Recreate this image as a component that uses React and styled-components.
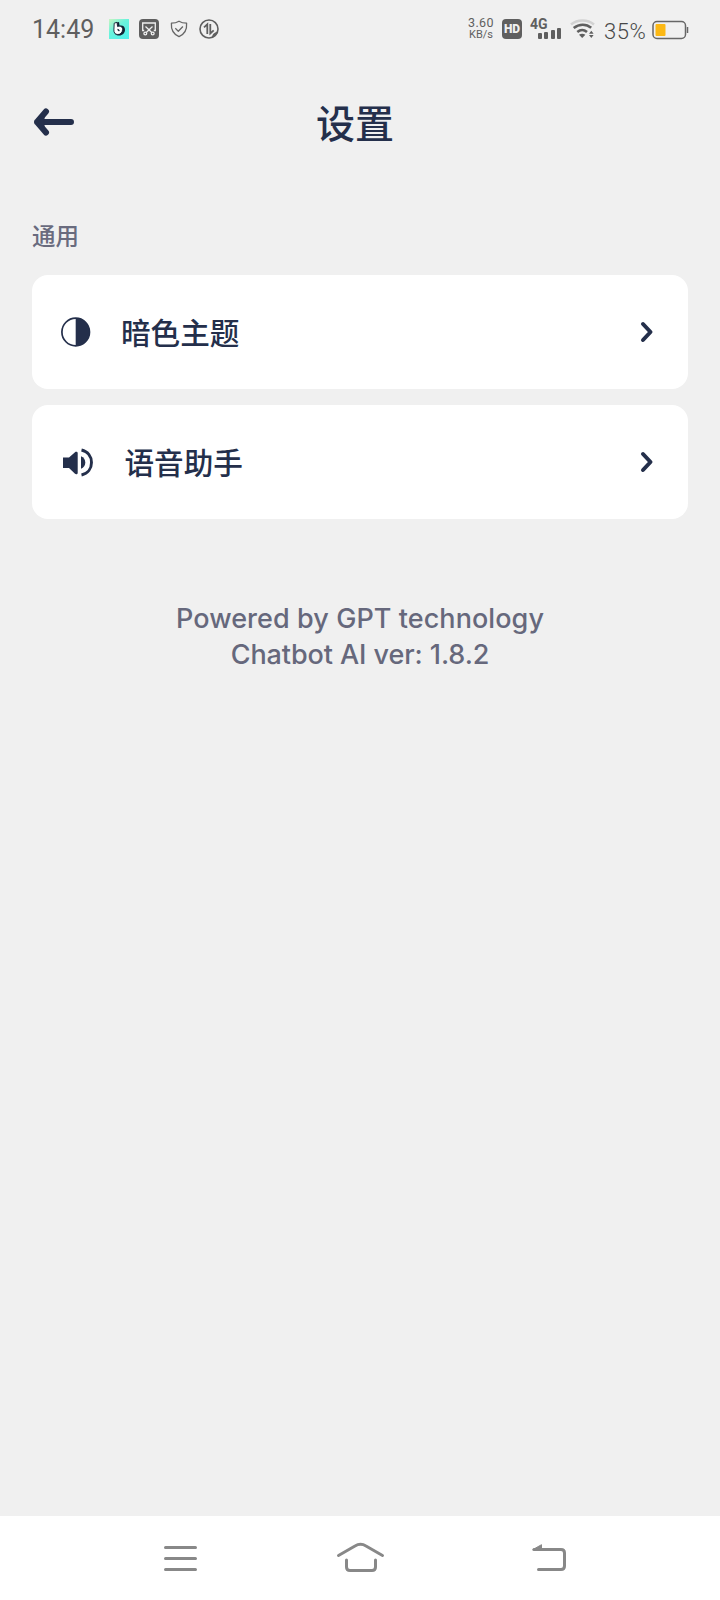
import React from 'react'
import styled, { createGlobalStyle } from 'styled-components'

const GlobalStyle = createGlobalStyle`
    * {
        box-sizing: border-box;
    }
    body {
        margin: 0;
        background: #f0f0f0;
    }
    svg {
        display: block;
        flex-shrink: 0;
        overflow: visible;
    }
`;

const Screen = styled.div`
    width: 100%;
    height: 1600px;
    display: flex;
    flex-direction: column;
    background: #f0f0f0;
    color: #242f4b;
    font-family: Inter, "Noto Sans CJK SC", sans-serif;
`;

const StatusBar = styled.div`
    height: 58px;
    display: flex;
    align-items: center;
    justify-content: space-between;
    padding: 0 31px 0 32px;
    color: #5f5f5f;
    font-family: Roboto, sans-serif;
`;

const StatusGroup = styled.div`
    display: flex;
    align-items: center;
    gap: ${props => props.$gap};
`;

const Clock = styled.div`
    width: 67px;
    padding-top: 2px;
    font-size: 25px;
    line-height: 30px;
`;

const Speed = styled.div`
    width: 26px;
    height: 22px;
    margin-right: 8px;
    display: flex;
    flex-direction: column;
    align-items: center;
    justify-content: space-between;
    line-height: 10px;
    white-space: nowrap;
`;

const SpeedValue = styled.div`
    font-size: 12.5px;
    letter-spacing: 0.4px;
`;

const SpeedUnit = styled.div`
    font-size: 11px;
`;

const HdBadge = styled.div`
    width: 20px;
    height: 20px;
    margin-right: 8px;
    border-radius: 4px;
    background: #5f5f5f;
    color: #f0f0f0;
    font-size: 12px;
    font-weight: 900;
    line-height: 20px;
    text-align: center;
`;

const Signal = styled.div`
    width: 32px;
    height: 22px;
    margin-right: 8px;
    display: flex;
    flex-direction: column;
    font-size: 14px;
    font-weight: 700;
    line-height: 12px;
`;

const SignalBars = styled.div`
    display: flex;
    align-items: flex-end;
    justify-content: flex-end;
    gap: 2.5px;
    height: 11px;
    margin-top: -2px;
    padding-right: 1px;
`;

const SignalBar = styled.div`
    width: 4px;
    height: ${props => props.$height}px;
    border-radius: 1px;
    background: #5f5f5f;
`;

const Percent = styled.div`
    width: 43px;
    margin: 5px 5px 0 9px;
    color: #484848;
    font-size: 22px;
    font-weight: 300;
    letter-spacing: 0.5px;
    line-height: 24px;
`;

const Header = styled.header`
    height: 128px;
    display: grid;
    grid-template-columns: 42px 1fr 42px;
    align-items: center;
    padding: 0 32px;
`;

const BackButton = styled.button`
    padding: 0;
    border: 0;
    background: none;
`;

const Title = styled.h1`
    margin: 0;
    padding: 4px 10px 0 0;
    font-size: 39px;
    font-weight: 500;
    line-height: 56px;
    text-align: center;
`;

const Content = styled.main`
    flex: 1;
    padding: 32px 32px 0;
`;

const SectionLabel = styled.h2`
    height: 36px;
    margin: 0 0 21px;
    color: #696b7e;
    font-size: 23.5px;
    font-weight: 500;
    line-height: 37px;
`;

const List = styled.div`
    display: flex;
    flex-direction: column;
    gap: 16px;
`;

const Row = styled.div`
    height: 114px;
    display: flex;
    align-items: center;
    padding: 0 34px 0 28px;
    border-radius: 16px;
    background: #fff;
`;

const RowText = styled.div`
    flex: 1;
    margin-left: ${props => props.$offset}px;
    padding-top: 2px;
    font-size: 29.6px;
    font-weight: 500;
    line-height: 44px;
`;

const Footer = styled.footer`
    margin-top: 82px;
    color: #66687c;
    font-size: 27px;
    font-weight: 500;
    line-height: 36px;
    text-align: center;
`;

const FooterLine = styled.div`
    letter-spacing: ${props => props.$spacing}px;
`;

const NavBar = styled.nav`
    height: 84px;
    display: flex;
    align-items: center;
    gap: 126px;
    padding-left: 159px;
    background: #fff;
`;

function AppIcon() {
    return (
        <svg width="20" height="20" viewBox="0 0 20 20">
            <defs>
                <linearGradient id="app" x1="0" y1="0" x2="0.8" y2="1">
                    <stop offset="0" stopColor="#c8f5c0" />
                    <stop offset="0.45" stopColor="#6bf3dc" />
                    <stop offset="1" stopColor="#4ff0ea" />
                </linearGradient>
            </defs>
            <rect width="20" height="20" fill="url(#app)" />
            <path d="M6 4l4-1 .6 3.800c3-.8 5.400.8 5.400 3.900 0 3.400-2.600 5.800-5.800 5.800S4.800 14.800 5 11.500z" fill="#123" />
            <path d="M5.200 4.200l2.800-.9.600 4.300c2.700-1.100 5.200.2 5 3-.2 3-2.200 4.900-4.700 4.900-2.900 0-4.200-1.900-4-4.600z" fill="#fff" stroke="#123" strokeWidth="0.900" />
            <path d="M8.700 10.200q1.800.2 1.600 1.800-1.700 0-1.600-1.800z" fill="#123" stroke="#123" strokeWidth="0.600" />
        </svg>
    )
}

function ScreenshotIcon() {
    return (
        <svg width="20" height="20" viewBox="0 0 20 20" fill="none" stroke="#f0f0f0" strokeWidth="1.300">
            <rect width="20" height="20" rx="4" fill="#5f5f5f" stroke="none" />
            <path d="M5.200 11.500H3.700V4h12.600v7.500h-1.500M6.500 7.500l6 5.700M13.500 7.500l-6 5.700" />
            <circle cx="6.300" cy="14.500" r="1.400" />
            <circle cx="13.700" cy="14.500" r="1.400" />
        </svg>
    )
}

function ShieldIcon() {
    return (
        <svg width="20" height="20" viewBox="0 0 20 20" fill="none" stroke="#666" strokeWidth="1.300" strokeLinejoin="round">
            <path d="M10 2.200c2.300 1.500 4.600 2 7.600 2 .5 6.500-2.200 11-7.600 13.400C4.600 15.200 1.900 10.700 2.400 4.200c3 0 5.300-.5 7.600-2z" />
            <path d="M6.300 9.300l3 2.900 4.600-4.700" />
        </svg>
    )
}

function DataIcon() {
    return (
        <svg width="20" height="20" viewBox="0 0 20 20" fill="none" stroke="#5f5f5f" strokeWidth="1.600">
            <circle cx="10" cy="10" r="9" />
            <path d="M5 8.300l3.300-3V15M11.300 5v9.500l3.400-3.200" strokeWidth="1.800" />
            <path d="M19 11.500c-.6 4-3.400 6.800-7.300 7.500 1.600-1 1.500-2.800 2.700-4.200s3.400-1.400 4.600-3.300z" fill="#5f5f5f" stroke="none" />
        </svg>
    )
}

function WifiIcon() {
    return (
        <svg width="25" height="20" viewBox="0 0 25 20" fill="none" stroke="#5f5f5f" strokeWidth="2.600">
            <path d="M1 5.500c6.500-5.300 16.500-5.300 23 0" stroke="#d2d2d2" />
            <path d="M3.700 9c5.500-4.300 12.500-4.300 17.500-.2M7.300 13c3-2.500 6.700-2.500 9.700 0" />
            <path d="M9 15.800c2-1.500 4.400-1.500 6.400 0L12.200 19z" fill="#5f5f5f" stroke="none" />
            <path d="M19 14.700l2.300-3 2.300 3zM19 16l2.300 3 2.300-3z" fill="#5f5f5f" stroke="none" />
        </svg>
    )
}

function BatteryIcon() {
    return (
        <svg width="37" height="20" viewBox="0 0 37 20">
            <rect x="1" y="2.500" width="32.500" height="17" rx="4" fill="none" stroke="#666" strokeWidth="1.500" />
            <rect x="3.500" y="5" width="10" height="12" rx="1" fill="#fcb814" />
            <path d="M35.500 8v6" stroke="#666" strokeWidth="1.500" />
        </svg>
    )
}

function ArrowIcon() {
    return (
        <svg width="42" height="28" viewBox="0 0 42 28" fill="none" stroke="#242f4b" strokeWidth="6" strokeLinecap="round" strokeLinejoin="round">
            <path d="M14 3.500L5 14l9 10.500M5 14h34" />
            <path d="M5 14l7-6v12z" fill="#242f4b" strokeWidth="1" />
        </svg>
    )
}

function ThemeIcon() {
    return (
        <svg width="32" height="32" viewBox="0 0 32 32">
            <circle cx="15.700" cy="16" r="13.800" fill="none" stroke="#242f4b" strokeWidth="1.700" />
            <path d="M15.700 2a14 14 0 010 28z" fill="#242f4b" />
        </svg>
    )
}

function SpeakerIcon() {
    return (
        <svg width="34" height="32" viewBox="0 0 34 32">
            <path d="M3 11.500h6L15 6.200c1-.9 2.700-.4 2.700.9v19.800c0 1.300-1.700 1.800-2.700.9L9 22H3z" fill="#242f4b" />
            <path d="M21 10.200c2.800 1.200 4.300 3.500 4.300 6.300s-1.500 5.100-4.300 6.300z" fill="#242f4b" />
            <path d="M21.500 4c6.500 1.500 10 6.500 10 12.500s-3.500 11-10 12.500" fill="none" stroke="#242f4b" strokeWidth="2.900" />
        </svg>
    )
}

function ChevronIcon() {
    return (
        <svg width="14" height="22" viewBox="0 0 14 22" fill="none" stroke="#242f4b" strokeWidth="4" strokeLinecap="round" strokeLinejoin="round">
            <path d="M3 3l7.500 8L3 19" />
        </svg>
    )
}

function NavIcon({ children }) {
    return (
        <svg width="54" height="40" viewBox="0 0 54 40" fill="none" stroke="#888" strokeWidth="3" strokeLinecap="round" strokeLinejoin="round">
            {children}
        </svg>
    )
}

const settings = [
    { name: '暗色主题', icon: <ThemeIcon />, offset: 29 },
    { name: '语音助手', icon: <SpeakerIcon />, offset: 30.5 },
]

function App() {
    return (
        <Screen>
            <GlobalStyle />
            <StatusBar>
                <StatusGroup $gap="10px">
                    <Clock>14:49</Clock>
                    <AppIcon />
                    <ScreenshotIcon />
                    <ShieldIcon />
                    <DataIcon />
                </StatusGroup>
                <StatusGroup $gap="0">
                    <Speed>
                        <SpeedValue>3.60</SpeedValue>
                        <SpeedUnit>KB/s</SpeedUnit>
                    </Speed>
                    <HdBadge>HD</HdBadge>
                    <Signal>
                        4G
                        <SignalBars>
                            {[6, 7, 9, 11].map(height => <SignalBar key={height} $height={height} />)}
                        </SignalBars>
                    </Signal>
                    <WifiIcon />
                    <Percent>35%</Percent>
                    <BatteryIcon />
                </StatusGroup>
            </StatusBar>
            <Header>
                <BackButton aria-label="返回"><ArrowIcon /></BackButton>
                <Title>设置</Title>
            </Header>
            <Content>
                <SectionLabel>通用</SectionLabel>
                <List>
                    {settings.map(item => (
                        <Row key={item.name}>
                            {item.icon}
                            <RowText $offset={item.offset}>{item.name}</RowText>
                            <ChevronIcon />
                        </Row>
                    ))}
                </List>
                <Footer>
                    <FooterLine $spacing={0.07}>Powered by GPT technology</FooterLine>
                    <FooterLine $spacing={-0.08}>Chatbot AI ver: 1.8.2</FooterLine>
                </Footer>
            </Content>
            <NavBar>
                <NavIcon><path d="M6.500 9.500h30M6.500 20.500h30M6.500 31.500h30" /></NavIcon>
                <NavIcon><path d="M-.5 17.500L16 8q5.500-3.500 11 0l16.500 9.500M7.500 22v7q0 3.500 3.500 3.500h22q3.500 0 3.500-3.500v-7" /></NavIcon>
                <NavIcon>
                    <path d="M15 11.500h27q3.500 0 3.500 3.500v13q0 3.500-3.500 3.500H19.500" />
                    <path d="M14 11.500l8.500-4.800v4.800z" fill="#888" strokeWidth="1" />
                </NavIcon>
            </NavBar>
        </Screen>
    )
}

export default App
